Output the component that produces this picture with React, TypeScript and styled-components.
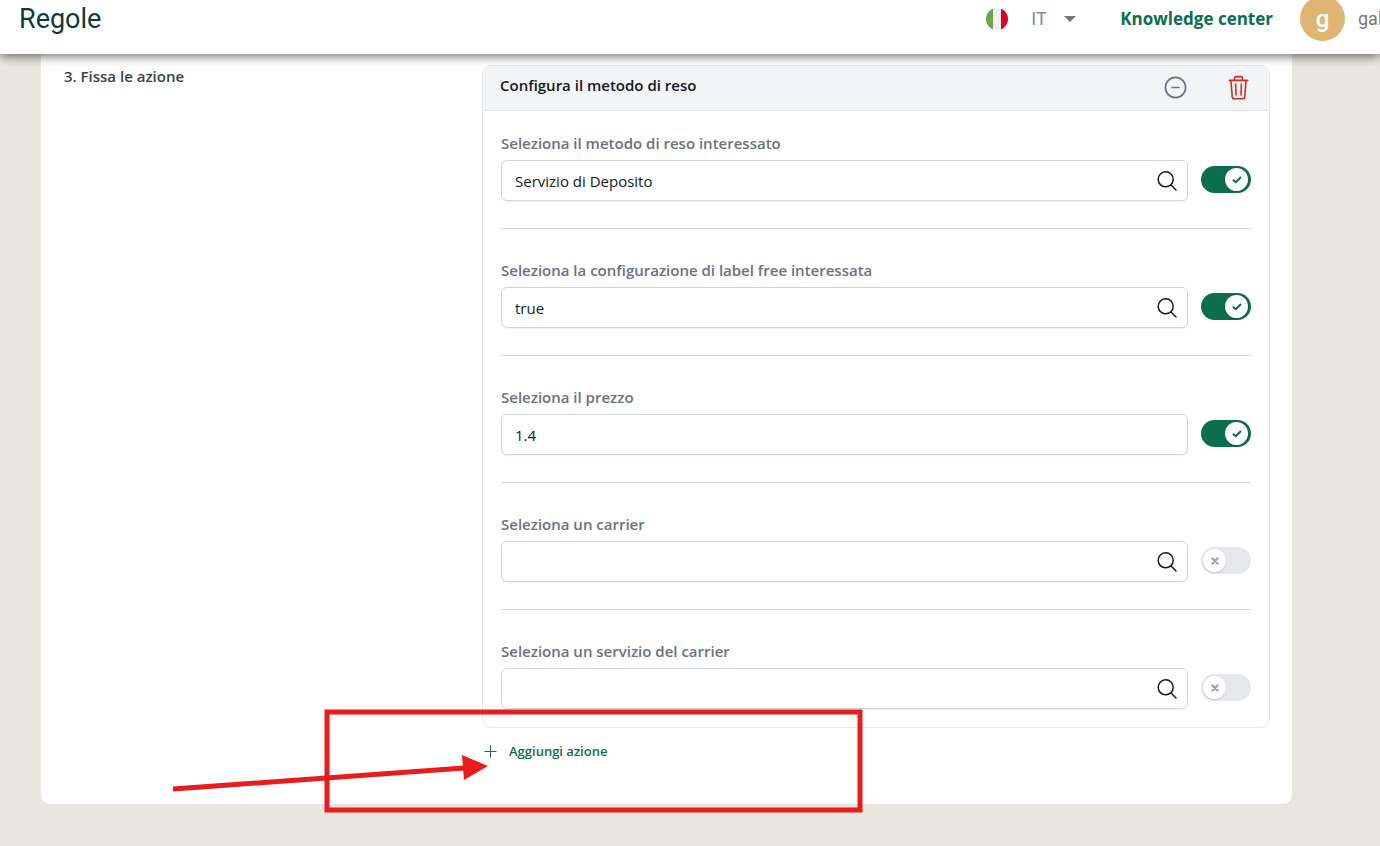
import React from "react";
import styled, { createGlobalStyle } from "styled-components";

const GlobalStyle = createGlobalStyle`
  *, *::before, *::after { box-sizing: border-box; }
  body {
    margin: 0;
    background: #e9e6df;
    color: #111827;
    font-family: "Open Sans", "Noto Sans", sans-serif;
    font-size: 15px;
    line-height: 22px;
    overflow-x: hidden;
  }
  button, input, select { font: inherit; color: inherit; }
`;

const TopBar = styled.header`
  position: sticky;
  top: 0;
  z-index: 2;
  display: flex;
  align-items: center;
  height: 54px;
  padding: 0 0 17px 19px;
  background: #fff;
  box-shadow: 0 2px 10px rgba(0, 0, 0, 0.6);
  font-family: Roboto, sans-serif;
`;

const PageTitle = styled.h1`
  margin: 0 auto 0 0;
  color: #0b3b3c;
  font-size: 27px;
  line-height: 36px;
  font-weight: 400;
`;

const Language = styled.label`
  display: flex;
  align-items: center;
  gap: 23px;
  margin-right: 44px;
`;

const LanguageSelect = styled.select`
  appearance: none;
  width: 48px;
  padding: 0;
  border: 0;
  background: transparent;
  color: #7b8f8e;
  font-size: 18px;
  line-height: 22px;
`;

const SelectBox = styled.span`
  display: flex;
  align-items: center;
  svg { margin-left: -15px; pointer-events: none; }
`;

const KnowledgeLink = styled.a`
  margin-right: 27px;
  color: #0b6e4f;
  font-family: "Open Sans", "Noto Sans", sans-serif;
  font-size: 17px;
  font-weight: 700;
  text-decoration: none;
`;

const Avatar = styled.span`
  display: grid;
  place-items: center;
  flex: none;
  width: 45px;
  height: 45px;
  margin-right: 13px;
  border-radius: 50%;
  background: #deb571;
  color: #fff;
  font-size: 24px;
  font-weight: 500;
`;

const UserName = styled.span`
  width: 22px;
  overflow: hidden;
  color: #757575;
  font-size: 18px;
  white-space: nowrap;
`;

const Card = styled.main`
  display: grid;
  grid-template-columns: 1fr 2fr;
  gap: 24px;
  margin: 0 88px 42px 41px;
  padding: 11px 22px 42px 23px;
  border-radius: 0 0 9px 9px;
  background: #fff;
`;

const StepTitle = styled.h2`
  margin: 0;
  color: #374151;
  font-size: 15px;
  font-weight: 600;
`;

const Panel = styled.section`
  border: 1px solid #e5e7eb;
  border-radius: 9px;
  overflow: hidden;
`;

const PanelHeader = styled.header`
  display: flex;
  align-items: flex-start;
  gap: 36px;
  padding: 8px 17px 9px;
  border-bottom: 1px solid #e5e7eb;
  background: #f3f4f6;
`;

const PanelTitle = styled.h3`
  margin: 0 auto 0 0;
  font-size: 15px;
  font-weight: 600;
`;

const IconButton = styled.button<{ $color: string }>`
  display: grid;
  padding: 0;
  border: 0;
  background: transparent;
  color: ${(p) => p.$color};
  cursor: pointer;
`;

const PanelBody = styled.div`
  padding: 21px 18px 18px;
`;

const Field = styled.div`
  display: grid;
  grid-template-columns: 1fr 50px;
  align-items: center;
  column-gap: 13px;
  row-gap: 6px;

  & + & {
    margin-top: 27px;
    padding-top: 30px;
    border-top: 1px solid #d1d5db;
  }
`;

const FieldLabel = styled.label`
  grid-column: 1 / -1;
  color: #6b7280;
  font-weight: 600;
`;

const InputBox = styled.div`
  display: flex;
  align-items: center;
  height: 41px;
  padding: 0 8px 0 13px;
  border: 1px solid #d1d5db;
  border-radius: 6px;
  background: #fff;
  box-shadow: 0 1px 2px rgba(0, 0, 0, 0.06);
`;

const TextInput = styled.input`
  flex: 1;
  min-width: 0;
  padding: 0;
  border: 0;
  outline: 0;
  background: transparent;
`;

const Toggle = styled.label`
  position: relative;
  display: block;
  height: 27px;
  margin-bottom: 2px;
  cursor: pointer;
`;

const ToggleInput = styled.input`
  appearance: none;
  display: block;
  width: 50px;
  height: 27px;
  margin: 0;
  border-radius: 14px;
  background: #e5e7eb;
  &:checked { background: #0b6e4f; }
  &:checked + span { left: 24px; color: #0b6e4f; }
`;

const Knob = styled.span`
  position: absolute;
  top: 2px;
  left: 2px;
  display: grid;
  place-items: center;
  width: 23px;
  height: 23px;
  border-radius: 50%;
  background: #fff;
  color: #9ca3af;
  box-shadow: 0 1px 2px rgba(0, 0, 0, 0.15);
`;

const Footer = styled.div`
  position: relative;
  margin-top: 12px;
`;

const AddButton = styled.button`
  display: flex;
  align-items: center;
  gap: 12px;
  padding: 0 0 0 2px;
  border: 0;
  background: transparent;
  color: #0b6e4f;
  font-size: 13px;
  font-weight: 600;
  cursor: pointer;
`;

const Callout = styled.svg`
  position: absolute;
  top: -32px;
  left: -312px;
  z-index: 1;
  pointer-events: none;
`;

const Flag = () => (
  <svg width="22" height="22" viewBox="0 0 22 22" role="img" aria-label="Italia">
    <clipPath id="flag"><circle cx="11" cy="11" r="11" /></clipPath>
    <g clipPath="url(#flag)">
      <rect width="22" height="22" fill="#f0f0f0" />
      <rect width="7" height="22" fill="#6da544" />
      <rect x="15" width="7" height="22" fill="#d80027" />
    </g>
  </svg>
);

const SearchIcon = () => (
  <svg width="24" height="24" viewBox="0 0 24 24" fill="none" stroke="#111827" strokeWidth="1.5" strokeLinecap="round" strokeLinejoin="round" aria-hidden="true">
    <path d="m21 21-5.2-5.2m0 0A7.5 7.5 0 1 0 5.2 5.2a7.5 7.5 0 0 0 10.6 10.6Z" />
  </svg>
);

const MinusCircle = () => (
  <svg width="27" height="27" viewBox="0 0 24 24" fill="none" stroke="currentColor" strokeWidth="1.5" strokeLinecap="round" aria-hidden="true">
    <circle cx="12" cy="12" r="9" />
    <path d="M15 12H9" />
  </svg>
);

const Trash = () => (
  <svg width="27" height="27" viewBox="0 0 27 27" fill="none" stroke="currentColor" strokeWidth="1.6" strokeLinecap="round" strokeLinejoin="round" aria-hidden="true">
    <path d="M4.3 6.4h18.4M6 6.6l1.2 16.3a2 2 0 0 0 2 1.8h8.6a2 2 0 0 0 2-1.8L21 6.6M9.5 6.2V4.3a1.7 1.7 0 0 1 1.7-1.7h4.6a1.7 1.7 0 0 1 1.7 1.7v1.9M10.6 10l.4 11M16.4 10l-.4 11" />
  </svg>
);

const CheckMark = () => (
  <svg width="10" height="8" viewBox="0 0 10 8" fill="none" stroke="currentColor" strokeWidth="2" strokeLinecap="round" strokeLinejoin="round" aria-hidden="true">
    <path d="M1.5 4.2 3.8 6.3 8.5 1.5" />
  </svg>
);

const CrossMark = () => (
  <svg width="8" height="8" viewBox="0 0 8 8" fill="none" stroke="currentColor" strokeWidth="2.4" strokeLinecap="round" aria-hidden="true">
    <path d="m1.5 1.5 5 5m0-5-5 5" />
  </svg>
);

const fields = [
  { id: "metodo", label: "Seleziona il metodo di reso interessato", value: "Servizio di Deposito", search: true, on: true },
  { id: "label-free", label: "Seleziona la configurazione di label free interessata", value: "true", search: true, on: true },
  { id: "prezzo", label: "Seleziona il prezzo", value: "1.4", search: false, on: true },
  { id: "carrier", label: "Seleziona un carrier", value: "", search: true, on: false },
  { id: "servizio", label: "Seleziona un servizio del carrier", value: "", search: true, on: false },
];

function Switch({ label, initial }: { label: string; initial: boolean }) {
  const [on, setOn] = React.useState(initial);
  return (
    <Toggle>
      <ToggleInput type="checkbox" role="switch" aria-label={label} checked={on} onChange={() => setOn(!on)} />
      <Knob>{on ? <CheckMark /> : <CrossMark />}</Knob>
    </Toggle>
  );
}

export default function App() {
  return (
    <>
      <GlobalStyle />
      <TopBar>
        <PageTitle>Regole</PageTitle>
        <Language>
          <Flag />
          <SelectBox>
            <LanguageSelect aria-label="Lingua" defaultValue="IT">
              <option>IT</option>
            </LanguageSelect>
            <svg width="12" height="6" viewBox="0 0 12 6" aria-hidden="true">
              <path d="M0 0h12L6 6z" fill="#757575" />
            </svg>
          </SelectBox>
        </Language>
        <KnowledgeLink href="#">Knowledge center</KnowledgeLink>
        <Avatar>g</Avatar>
        <UserName>gal</UserName>
      </TopBar>
      <Card>
        <StepTitle>3. Fissa le azione</StepTitle>
        <div>
          <Panel>
            <PanelHeader>
              <PanelTitle>Configura il metodo di reso</PanelTitle>
              <IconButton type="button" $color="#6b7280" aria-label="Riduci"><MinusCircle /></IconButton>
              <IconButton type="button" $color="#dc2626" aria-label="Elimina"><Trash /></IconButton>
            </PanelHeader>
            <PanelBody>
              {fields.map((f) => (
                <Field key={f.id}>
                  <FieldLabel htmlFor={f.id}>{f.label}</FieldLabel>
                  <InputBox>
                    <TextInput id={f.id} type="text" defaultValue={f.value} />
                    {f.search && <SearchIcon />}
                  </InputBox>
                  <Switch label={f.label} initial={f.on} />
                </Field>
              ))}
            </PanelBody>
          </Panel>
          <Footer>
            <AddButton type="button">
              <svg width="13" height="13" viewBox="0 0 13 13" stroke="currentColor" aria-hidden="true">
                <path d="M6.5 .5v12M.5 6.5h12" />
              </svg>
              Aggiungi azione
            </AddButton>
            <Callout width="694" height="108" viewBox="0 0 694 108" aria-hidden="true">
              <rect x="157" y="4" width="533" height="98" fill="none" stroke="#e81c1c" strokeWidth="5" />
              <path d="M3 81 294 60" stroke="#e81c1c" strokeWidth="5" />
              <path d="M292 47 318 58 294 72z" fill="#e81c1c" />
            </Callout>
          </Footer>
        </div>
      </Card>
    </>
  );
}
